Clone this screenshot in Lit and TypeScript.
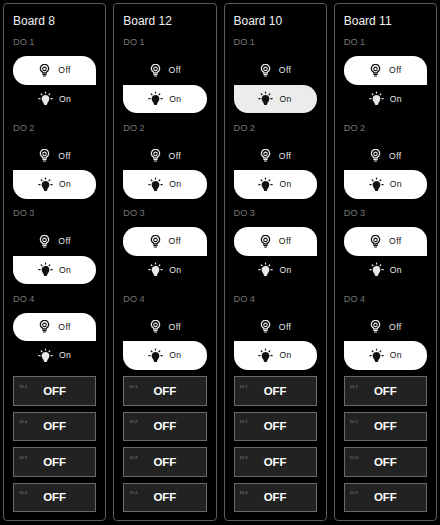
import { LitElement, html, css, svg } from "lit";
import { customElement } from "lit/decorators.js";

const bulbOff = svg`<svg class="ic" viewBox="0 0 24 24" fill="none" stroke="currentColor" stroke-width="2.4"><path d="M8.6 16.4v-1.3A7.6 7.6 0 1 1 15.4 15.1v1.3z" stroke-linejoin="round"/><circle cx="12" cy="9" r="3.2" stroke-width="2"/><path d="M9 19.3h6M10 22.2h4" stroke-width="2.2" stroke-linecap="round"/></svg>`;
const bulbOn = svg`<svg class="ic big" viewBox="0 0 24 24" fill="currentColor" stroke="none"><path d="M12 6.2a6.3 6.3 0 0 0-5 10.1c1.2 1.5 2 2.6 2.4 4.4l.2 1c.1.5.4.8 1 .8h2.8c.6 0 .9-.3 1-.8l.2-1c.4-1.8 1.2-2.9 2.4-4.4a6.3 6.3 0 0 0-5-10.1z"/><g stroke="currentColor" stroke-width="2" stroke-linecap="round"><path d="M12 1.6v1.5M5.2 4.8l1.1 1.1M18.8 4.8l-1.1 1.1M1.4 12.2h1.8M20.8 12.2h1.8"/></g></svg>`;

type B = { name: string; sel: ("off" | "on" | "onG")[]; di: string[] };
const boards: B[] = [
  { name: "Board 8", sel: ["off", "on", "on", "off"], di: ["DI 1", "DI 4", "DI 3", "DI 2"] },
  { name: "Board 12", sel: ["on", "on", "off", "on"], di: ["DI 1", "DI 2", "DI 3", "DI 4"] },
  { name: "Board 10", sel: ["onG", "on", "off", "on"], di: ["DI 1", "DI 2", "DI 3", "DI 4"] },
  { name: "Board 11", sel: ["off", "on", "off", "on"], di: ["DI 1", "DI 2", "DI 3", "DI 4"] },
];

@customElement("app-root")
export class AppRoot extends LitElement {
  static styles = css`
    :host { display: block; width: 440px; height: 525px; background: #000; overflow: hidden;
      font-family: "Liberation Sans", Arial, sans-serif; color: #fff; }
    .grid { display: grid; grid-template-columns: repeat(4, 1fr); gap: 7px; padding: 3px 3px 0; }
    .card { height: 518px; box-sizing: border-box; border: 1px solid #5a5a5a; border-radius: 4px; padding: 9px 9px 0; }
    h2 { margin: 0; font-weight: 400; font-size: 12px; line-height: 16px; color: #f2f2f2; }
    .lbl { font-size: 9.2px; line-height: 12px; color: #777; margin: 0 0 8px; }
    .do { height: 85.5px; }
    .dos { margin-top: 7px; }
    .opt { height: 28.5px; display: flex; align-items: center; justify-content: center; gap: 7px; font-size: 8.6px; color: #e8e8e8; letter-spacing: .4px; box-sizing: border-box; }
    .ic { width: 13px; height: 13px; display: block; }
    .ic.big { width: 15px; height: 15px; margin-right: -1px; }
    .opt.off.sel { background: #fff; color: #111; border-radius: 14px 14px 0 14px; }
    .opt.on.sel { background: #fff; color: #111; border-radius: 0 14px 14px 14px; }
    .opt.on.g { background: #ececec; }
    .dis { display: flex; flex-direction: column; gap: 6px; margin-top: -2px; }
    .di { height: 29.5px; box-sizing: border-box; background: #222; border: 1px solid #6a6a6a; position: relative;
      display: flex; align-items: center; justify-content: center; font-weight: 700; font-size: 11.5px; color: #fff; }
    .di span { position: absolute; left: 5.5px; top: 6.5px; font-size: 4.2px; line-height: 5px; font-weight: 400; color: #8a8a8a; }
  `;
  render() {
    return html`<div class="grid">
      ${boards.map(
        (b) => html`<div class="card">
          <h2>${b.name}</h2>
          <div class="dos">
            ${b.sel.map(
              (s, i) => html`<div class="do">
                <div class="lbl">DO ${i + 1}</div>
                <div class="opt off ${s === "off" ? "sel" : ""}">${bulbOff}<span>Off</span></div>
                <div class="opt on ${s !== "off" ? "sel" : ""} ${s === "onG" ? "g" : ""}">${bulbOn}<span>On</span></div>
              </div>`
            )}
          </div>
          <div class="dis">
            ${b.di.map((d) => html`<div class="di"><span>${d}</span>OFF</div>`)}
          </div>
        </div>`
      )}
    </div>`;
  }
}
